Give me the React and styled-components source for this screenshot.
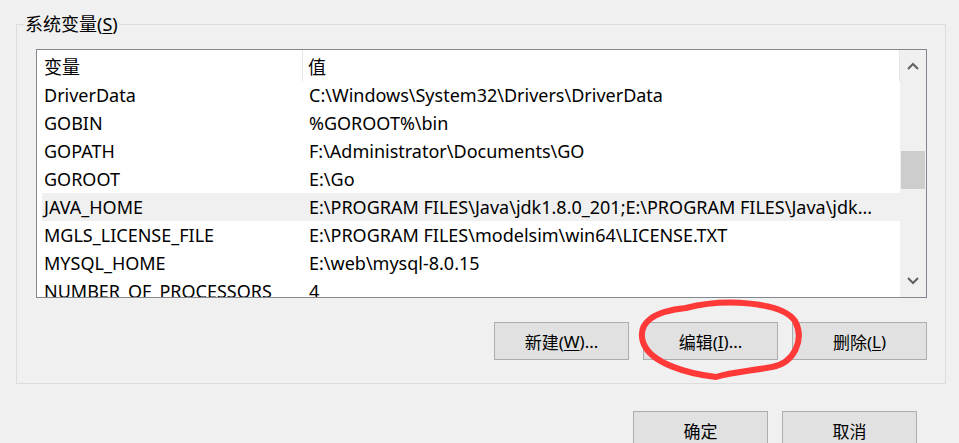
import React from 'react';
import styled, { createGlobalStyle } from 'styled-components';

const GlobalStyle = createGlobalStyle`
  html, body {
    margin: 0;
    padding: 0;
    background: #f0f0f0;
  }
  body {
    font-family: 'Noto Sans', 'Noto Sans CJK SC', sans-serif;
    color: #000;
  }
`;

/* page + group box */

const Page = styled.div`
  position: relative;
  width: 959px;
  height: 443px;
  overflow: hidden;
  padding: 13px 0 0 16px;
  box-sizing: border-box;
`;

const GroupBox = styled.fieldset`
  width: 930px;
  height: 371px;
  box-sizing: border-box;
  margin: 0;
  padding: 14px 18px 0 19px;
  border: 1px solid #dcdcdc;
  display: flex;
  flex-direction: column;
`;

const Legend = styled.legend`
  font-size: 18px;
  padding: 0 1px;
  margin-left: -12px;
  line-height: 22px;
  color: #000;
`;

const Key = styled.span`
  text-decoration: underline;
  text-underline-offset: 2px;
`;

/* list view */

const ListBox = styled.div`
  width: 891px;
  height: 249px;
  box-sizing: border-box;
  border: 1px solid #828790;
  background: #fff;
  display: flex;
  overflow: hidden;
`;

const Table = styled.div`
  flex: 1;
  min-width: 0;
  display: flex;
  flex-direction: column;
  padding-left: 5px;
`;

const HeaderRow = styled.div`
  height: 31px;
  flex-shrink: 0;
  display: flex;
  align-items: center;
  font-size: 18px;
`;

const HeaderCell = styled.div`
  width: ${(p) => p.$width || 'auto'};
  flex: ${(p) => (p.$width ? 'none' : '1')};
  height: 100%;
  box-sizing: border-box;
  display: flex;
  align-items: center;
  padding-left: 2px;
  border-right: 1px solid #e5e5e5;
  & + & {
    padding-left: 5px;
  }
`;

const Row = styled.div`
  height: 28px;
  flex-shrink: 0;
  display: flex;
  align-items: center;
  font-size: 18px;
  background: ${(p) => (p.$selected ? '#f0f0f0' : 'transparent')};
`;

const NameCell = styled.div`
  width: 261px;
  padding-left: 2px;
  white-space: nowrap;
  flex-shrink: 0;
`;

const ValueCell = styled.div`
  flex: 1;
  min-width: 0;
  padding-left: 4px;
  white-space: nowrap;
  overflow: hidden;
  text-overflow: ellipsis;
`;

const ScrollBar = styled.div`
  width: 26px;
  flex-shrink: 0;
  background: #f0f0f0;
  display: flex;
  flex-direction: column;
  align-items: center;
`;

const ArrowBtn = styled.div`
  width: 26px;
  height: 32px;
  display: flex;
  align-items: center;
  justify-content: center;
  color: #606060;
`;

const Track = styled.div`
  flex: 1;
  width: 100%;
  padding-top: 69px;
  box-sizing: border-box;
`;

const Thumb = styled.div`
  width: 24px;
  height: 38px;
  margin-left: 1px;
  background: #cdcdcd;
`;

/* buttons */

const ButtonRow = styled.div`
  display: flex;
  justify-content: flex-end;
  gap: 14px;
  margin-top: 24px;
  width: 891px;
`;

const Button = styled.button`
  width: 135px;
  height: 38px;
  box-sizing: border-box;
  background: #e1e1e1;
  border: 1px solid #adadad;
  border-radius: 0;
  font-family: inherit;
  font-size: 17px;
  color: #000;
  padding: 0;
  display: flex;
  align-items: center;
  justify-content: center;
`;

const DialogButtons = styled.div`
  display: flex;
  justify-content: flex-end;
  gap: 14px;
  margin-top: 27px;
  width: 901px;
`;

const Scribble = styled.svg`
  position: absolute;
  left: 0;
  top: 0;
  pointer-events: none;
`;

const rows = [
  ['DriverData', 'C:\\Windows\\System32\\Drivers\\DriverData'],
  ['GOBIN', '%GOROOT%\\bin'],
  ['GOPATH', 'F:\\Administrator\\Documents\\GO'],
  ['GOROOT', 'E:\\Go'],
  ['JAVA_HOME', 'E:\\PROGRAM FILES\\Java\\jdk1.8.0_201;E:\\PROGRAM FILES\\Java\\jdk...'],
  ['MGLS_LICENSE_FILE', 'E:\\PROGRAM FILES\\modelsim\\win64\\LICENSE.TXT'],
  ['MYSQL_HOME', 'E:\\web\\mysql-8.0.15'],
  ['NUMBER_OF_PROCESSORS', '4'],
];

const Chevron = ({ up }) => (
  <svg width="12" height="8" viewBox="0 0 12 8">
    <path
      d={up ? 'M1 7 L6 2 L11 7' : 'M1 1 L6 6 L11 1'}
      fill="none"
      stroke="currentColor"
      strokeWidth="2"
    />
  </svg>
);

function App() {
  return (
    <Page>
      <GlobalStyle />
      <GroupBox>
        <Legend>
          系统变量(<Key>S</Key>)
        </Legend>
        <ListBox>
          <Table>
            <HeaderRow>
              <HeaderCell $width="261px">变量</HeaderCell>
              <HeaderCell>值</HeaderCell>
            </HeaderRow>
            {rows.map(([name, value]) => (
              <Row key={name} $selected={name === 'JAVA_HOME'}>
                <NameCell>{name}</NameCell>
                <ValueCell>{value}</ValueCell>
              </Row>
            ))}
          </Table>
          <ScrollBar>
            <ArrowBtn>
              <Chevron up />
            </ArrowBtn>
            <Track>
              <Thumb />
            </Track>
            <ArrowBtn>
              <Chevron />
            </ArrowBtn>
          </ScrollBar>
        </ListBox>
        <ButtonRow>
          <Button>
            新建(<Key>W</Key>)...
          </Button>
          <Button>
            编辑(<Key>I</Key>)...
          </Button>
          <Button>
            删除(<Key>L</Key>)
          </Button>
        </ButtonRow>
      </GroupBox>
      <DialogButtons>
        <Button>确定</Button>
        <Button>取消</Button>
      </DialogButtons>
      <Scribble width="959" height="443" viewBox="0 0 959 443">
        <path
          d="M686 308 C725 298, 782 302, 795 321 C805 340, 794 363, 772 367 C750 371, 732 372, 716 377 C690 374, 650 364, 643 342 C637 322, 655 311, 686 308 Z"
          fill="none"
          stroke="#ff3838"
          strokeWidth="6"
          strokeLinejoin="round"
          strokeLinecap="round"
        />
      </Scribble>
    </Page>
  );
}

export default App;
